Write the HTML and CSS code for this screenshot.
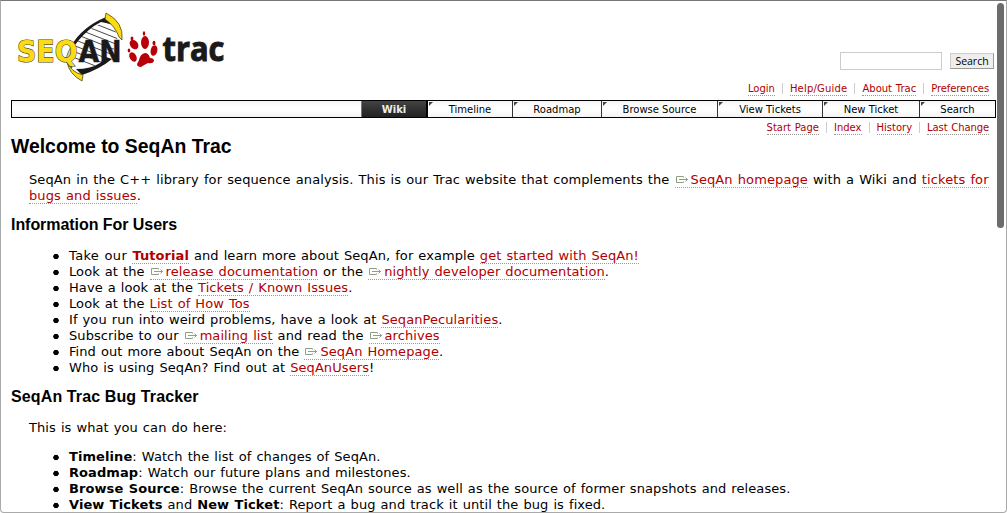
FILE: index.html
```html
<!DOCTYPE html>
<html lang="en">
<head>
<meta charset="utf-8">
<title>SeqAn Trac</title>
<link rel="stylesheet" href="styles.css">
</head>
<body>
<svg class="defs" width="0" height="0"><symbol id="ext" viewBox="0 0 14 10"><path d="M8.500 2.500v-1h-7v6h7v-1M4 4.500h9M10.500 2.500l2 2-2 2" fill="none" stroke="#8f9f85" stroke-width="1"/></symbol></svg>
<div class="window">
<main class="page">
<header class="banner">
<svg class="logo" width="220" height="76" viewBox="10 8 220 76">
<clipPath id="helix"><path d="M107 21Q82 30 72 49Q64 65 78 71Q105 66 116 46Q121 32 107 21Z"/></clipPath>
<g clip-path="url(#helix)"><path d="M60 4l66 26M60 10l66 26M60 16l66 26M60 22l66 26M60 28l66 26M60 34l66 26M60 40l66 26M60 46l66 26M60 52l66 26" stroke="#333" stroke-width=".9"/></g>
<path d="M106 17Q82 27 71 46L75 45Q83 34 94 26L101 22L111 24Z" fill="#1a1a1a"/>
<path d="M112 59Q100 69 82 75L76 69Q91 69 100 63L106 57Z" fill="#1a1a1a"/>
<path d="M71 47Q65 56 67 63L72 68Q67 57 74 48Z" fill="#ccc" stroke="#333" stroke-width=".6"/>
<path d="M106 13Q124 22 122 40L119 37Q115 26 105 19Z" fill="#fbdc13" stroke="#4a4519" stroke-width=".8"/>
<path d="M67 62Q71 72 83 75L82 81Q69 74 67 62Z" fill="#fbdc13" stroke="#4a4519" stroke-width=".8"/>
<text class="seqan seq" x="17" y="61.500" textLength="60.500" lengthAdjust="spacingAndGlyphs">SEQ</text>
<text class="seqan an" x="78.500" y="61.500" textLength="43" lengthAdjust="spacingAndGlyphs">AN</text>
<g fill="#b70008">
<ellipse cx="134" cy="44.500" rx="3.900" ry="5.200" transform="rotate(-35 134 44.500)"/><ellipse cx="145" cy="42.500" rx="4" ry="6.500"/><ellipse cx="154" cy="50.500" rx="3.300" ry="5.400" transform="rotate(12 154 50.500)"/><ellipse cx="133" cy="57" rx="3.400" ry="5" transform="rotate(-28 133 57)"/>
<path d="M140 57Q142 53 146 53Q149 54 150 58Q154 58 154 61Q153 64 148 63Q144 65 141 67Q137 67 137 64Q139 61 140 57Z"/>
<ellipse cx="132" cy="38.500" rx="1.400" ry="2"/><ellipse cx="144" cy="33.500" rx="1.200" ry="2.200"/><ellipse cx="154" cy="43" rx="1.500" ry="2.200"/><ellipse cx="129" cy="50.500" rx="1.300" ry="2"/>
</g>
<text class="trac" x="162.500" y="61" textLength="62" lengthAdjust="spacingAndGlyphs">trac</text>
</svg>
<form class="search"><input class="query" type="text" aria-label="Query"><button class="go" type="button">Search</button></form>
</header>
<nav class="links meta"><a class="link">Login</a><a class="link wide">Help/Guide</a><a class="link">About Trac</a><a class="link narrow">Preferences</a></nav>
<nav class="mainnav"><span class="spacer"></span><a class="tab active">Wiki</a><a class="tab">Timeline</a><a class="tab">Roadmap</a><a class="tab">Browse Source</a><a class="tab">View Tickets</a><a class="tab">New Ticket</a><a class="tab">Search</a></nav>
<nav class="links context"><a class="link">Start Page</a><a class="link">Index</a><a class="link">History</a><a class="link narrow">Last Change</a></nav>
<h1 class="title">Welcome to SeqAn Trac</h1>
<p class="para intro">SeqAn in the C++ library for sequence analysis. This is our Trac website that complements the <a class="link"><svg class="ext"><use href="#ext"/></svg>SeqAn homepage</a> with a Wiki and <a class="link">tickets for<br>bugs and issues</a>.</p>
<h2 class="heading">Information For Users</h2>
<ul class="list">
<li><span class="lead">Take our </span><a class="link"><b>Tutorial</b></a> and learn more about SeqAn, for example <a class="link">get started with SeqAn!</a></li>
<li>Look at the <a class="link"><svg class="ext"><use href="#ext"/></svg>release documentation</a> or the <a class="link"><svg class="ext"><use href="#ext"/></svg>nightly developer documentation</a>.</li>
<li>Have a look at the <a class="link">Tickets / Known Issues</a>.</li>
<li>Look at the <a class="link">List of How Tos</a></li>
<li>If you run into weird problems, have a look at <a class="link">SeqanPecularities</a>.</li>
<li>Subscribe to our <a class="link"><svg class="ext"><use href="#ext"/></svg>mailing list</a> and read the <a class="link"><svg class="ext"><use href="#ext"/></svg>archives</a></li>
<li>Find out more about SeqAn on the <a class="link"><svg class="ext"><use href="#ext"/></svg>SeqAn Homepage</a>.</li>
<li>Who is using SeqAn? Find out at <a class="link">SeqAnUsers</a>!</li>
</ul>
<h2 class="heading tracker">SeqAn Trac Bug Tracker</h2>
<p class="para">This is what you can do here:</p>
<ul class="list">
<li><b>Timeline</b>: Watch the list of changes of SeqAn.</li>
<li><b>Roadmap</b>: Watch our future plans and milestones.</li>
<li><b>Browse Source</b>: Browse the current SeqAn source as well as the source of former snapshots and releases.</li>
<li><b>View Tickets</b> and <b>New Ticket</b>: Report a bug and track it until the bug is fixed.</li>
</ul>
</main>
<div class="scrollbar"></div>
</div>
</body>
</html>
```
FILE: styles.css
```css
* { box-sizing: border-box; }
body { margin: 0; background: #fff; color: #000; font: 13px/16px Verdana, "DejaVu Sans", sans-serif; }
.defs { position: absolute; }
.window { position: relative; height: 513px; overflow: hidden; border: 1px solid #aaa; border-top-color: #777; border-radius: 0 0 4px 4px; }
.page { padding: 0 10px; }
.banner { display: flex; justify-content: space-between; height: 79px; padding-top: 7px; }
.logo { margin-left: -1px; }
.seqan { font: bold 30px "DejaVu Sans", sans-serif; }
.seq { fill: #fbdc13; stroke: #4a4519; stroke-width: 1.2px; paint-order: stroke; }
.an { fill: #1a1a1a; stroke: #1a1a1a; stroke-width: .5px; }
.trac { font: bold 34px "Open Sans", sans-serif; fill: #1a1a1a; stroke: #1a1a1a; stroke-width: 1px; }
.search { display: flex; align-items: flex-start; gap: 8px; padding-top: 44px; margin-right: 2px; }
.query { width: 102px; height: 18px; border: 1px solid #ccc; padding: 0; }
.go { width: 44px; height: 16px; margin-top: 1px; padding: 0; border: 1px solid #999; border-top-color: #ccc; border-left-color: #ccc; background: #eee; color: #000; font: 10.500px/13px "Open Sans", sans-serif; }
.link { color: #b00000; border-bottom: 1px dotted #999; }
.links { display: flex; justify-content: flex-end; gap: 15px; padding-right: 7px; font-size: 10px; line-height: 12px; word-spacing: .6px; }
.links .link { position: relative; height: 13px; white-space: nowrap; }
.links .wide { letter-spacing: .2px; }
.links .narrow { letter-spacing: -.09px; }
.links .link + .link::before { content: ""; position: absolute; left: -8px; top: 0; height: 11px; border-left: 1px solid #ccc; }
.meta { padding-top: 3px; height: 20px; }
.mainnav { display: grid; grid-template-columns: 349px 67px 85px 89px 116px 105px 97px 1fr; width: 985px; height: 18px; border: 1px solid #000; background: linear-gradient(#f4f4f4, #fff 35%, #fff 55%, #f3f3f3); font-size: 10px; line-height: 17px; }
.tab { position: relative; height: 16px; text-align: center; border-right: 1px solid #333; }
.tab:last-child { border-right: 0; }
.tab:not(.active)::before { content: ""; position: absolute; left: 1px; top: 1px; border-top: 4px solid #444; border-right: 4px solid transparent; }
.tab.active { background: linear-gradient(#444, #333 45%, #222); color: #eee; font-weight: bold; border-left: 1px solid #777; border-right: 2px solid #000; }
.context { padding-top: 4px; height: 17px; }
.title { margin: 0; height: 37px; font: bold 19.400px/22px "Liberation Sans", sans-serif; }
.para, .list { white-space: nowrap; word-spacing: .8px; letter-spacing: .08px; }
.para { margin: 0 18px; }
.intro { letter-spacing: .11px; }
.lead { letter-spacing: .35px; }
.heading { margin: 11px 0 14px; font: bold 16px/19px "Liberation Sans", sans-serif; letter-spacing: -.05px; }
.list { margin: 0; padding-left: 58px; list-style: none; }
.list li { margin-left: -16px; padding-left: 16px; background: radial-gradient(circle at 3px 8.500px, #000 2.400px, transparent 3.100px); }
.tracker { margin-top: 11px; letter-spacing: .12px; }
.tracker + .para { margin-bottom: 13px; }
.ext { width: 14px; height: 10px; margin-right: 2px; vertical-align: -1px; }
.scrollbar { position: absolute; top: 2px; right: 2px; width: 7px; height: 225px; border-radius: 4px; background: #6c6c6c; }
```
